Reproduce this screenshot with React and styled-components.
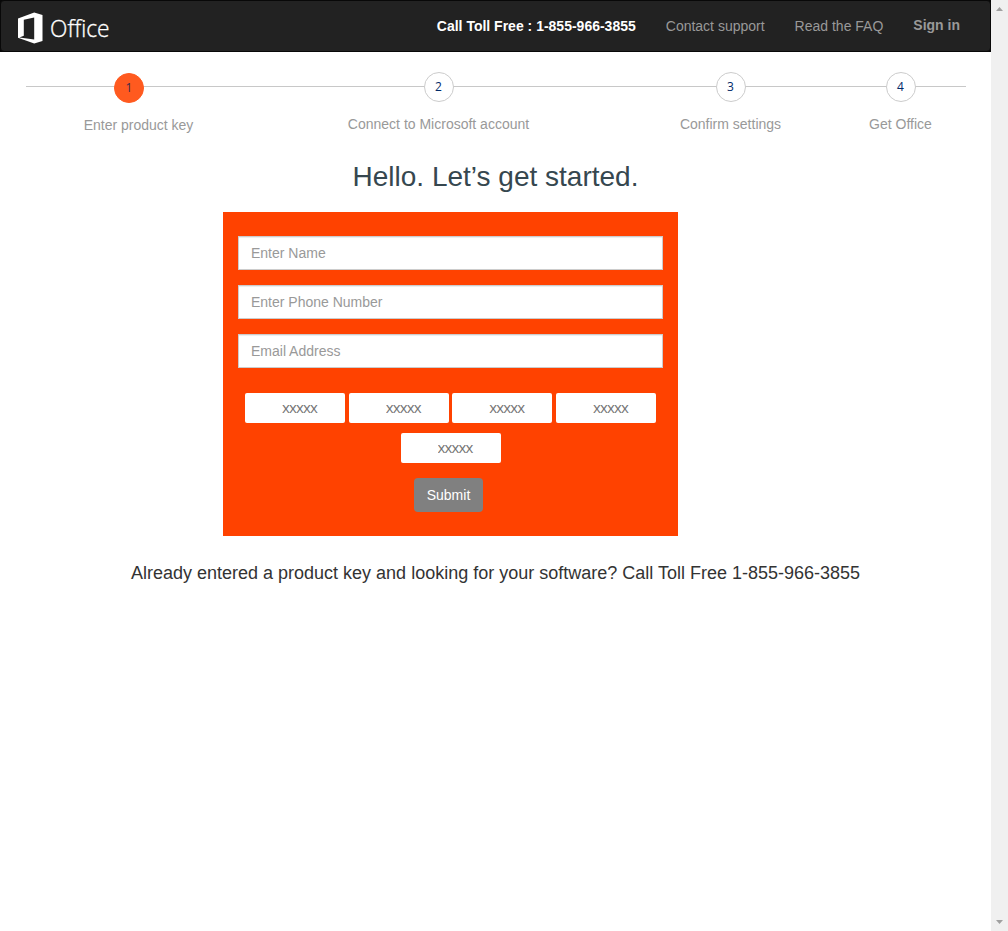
import React from 'react';
import styled, { createGlobalStyle } from 'styled-components';

const GlobalStyle = createGlobalStyle`
  * { box-sizing: border-box; }
  body {
    margin: 0;
    background: #fff;
    color: #333;
    font: 14px/20px "Liberation Sans", Arial, sans-serif;
  }
`;

const Shell = styled.div`
  display: flex;
  height: 931px;
  overflow: hidden;
`;

const Page = styled.main`
  width: 991px;
`;

const Navbar = styled.header`
  display: flex;
  align-items: flex-start;
  justify-content: space-between;
  height: 52px;
  padding: 0 30px 0 17px;
  background: #222;
  border: 1px solid #080808;
  border-radius: 4px;
  box-shadow: 0 0 0 4px #080808;
  clip-path: inset(0);
`;

const Brand = styled.a`
  display: flex;
  margin-top: 10px;
  margin-left: -1px;
`;

const Nav = styled.nav`
  display: flex;
  gap: 30px;
  padding-top: 15px;
`;

const NavLink = styled.a`
  color: ${(p) => (p.$bright ? '#fff' : '#999')};
  font-weight: ${(p) => (p.$bold ? 700 : 400)};
  white-space: nowrap;
`;

const SignIn = styled(NavLink)`
  margin-top: -1px;
`;

const Steps = styled.ol`
  position: relative;
  display: grid;
  grid-template-columns: 225px 375px 209px 131px;
  width: 940px;
  margin: 20px 0 0 26px;
  padding: 0;
  list-style: none;

  &::before {
    content: '';
    position: absolute;
    top: 14px;
    left: 0;
    right: 0;
    height: 1px;
    background: #c8c8c8;
  }
`;

const Step = styled.li`
  display: flex;
  flex-direction: column;
  align-items: center;
  gap: 12px;
  padding-top: ${(p) => (p.$active ? '1px' : '0')};
  color: #999;
`;

const StepNumber = styled.span`
  position: relative;
  width: 30px;
  height: 30px;
  margin-right: ${(p) => (p.$active ? '19px' : '0')};
  border: 1px solid ${(p) => (p.$active ? '#ff5a1f' : '#ccc')};
  border-radius: 50%;
  background: ${(p) => (p.$active ? '#ff5a1f' : '#fff')};
  color: ${(p) => (p.$active ? '#3a2a4c' : '#002a68')};
  font: 12px/28px "Open Sans", sans-serif;
  text-align: center;
`;

const Title = styled.h1`
  margin: 26px 0 19px;
  color: #36474f;
  font-size: 28px;
  font-weight: 400;
  line-height: 32px;
  text-align: center;
`;

const Form = styled.form`
  width: 455px;
  height: 324px;
  margin-left: 223px;
  padding: 24px 15px;
  background: #ff4200;
`;

const Field = styled.input`
  display: block;
  width: 100%;
  height: 34px;
  margin-bottom: 15px;
  padding: 6px 12px;
  border: 1px solid #ccc;
  border-radius: 0;
  box-shadow: inset 0 1px 1px rgba(0, 0, 0, 0.075);
  font: inherit;

  &::placeholder { color: #999; opacity: 1; }
`;

const KeyRow = styled.div`
  display: flex;
  flex-wrap: wrap;
  justify-content: center;
  gap: 10px 3.67px;
  margin-top: 25px;
`;

const KeyInput = styled.input`
  width: 100px;
  height: 30px;
  padding: 0 0 3px 37px;
  border: 0;
  border-radius: 2px;
  background: #fff;
  font: 15px "Open Sans", sans-serif;
  letter-spacing: -0.85px;

  &::placeholder { color: #757575; opacity: 1; }
`;

const Submit = styled.button`
  display: block;
  width: 69px;
  height: 34px;
  margin: 15px 0 0 176px;
  padding: 0;
  border: 0;
  border-radius: 4px;
  background: #808080;
  color: #fff;
  font: inherit;
`;

const Notice = styled.p`
  margin: 27px 0 0;
  font-size: 18px;
  text-align: center;
`;

const Scrollbar = styled.aside`
  display: flex;
  flex-direction: column;
  align-items: center;
  justify-content: space-between;
  width: 17px;
  padding: 7px 0;
  background: #f0f0f0;
`;

const Arrow = styled.svg`
  display: block;
  width: 7px;
  height: 4px;
  fill: #a0a0a0;
  transform: ${(p) => (p.$down ? 'rotate(180deg)' : 'none')};
`;

const WordMark = styled.text`
  fill: #fff;
  stroke: #fff;
  stroke-width: 0.35px;
  font: 300 24px "Open Sans", sans-serif;
`;

const steps = ['Enter product key', 'Connect to Microsoft account', 'Confirm settings', 'Get Office'];
const fields = ['Enter Name', 'Enter Phone Number', 'Email Address'];

const OfficeLogo = () => (
  <svg width="96" height="34" viewBox="0 0 96 34" aria-label="Office">
    <path fill="#fff" d="M1 7.6 17.2 1.6 25.5 4v26l-8.3 2.4L1 26.8V7.6M6.8 8.8v15.9L2.4 26.6l14.8 1.9V6.5z" fillRule="evenodd" />
    <WordMark x="33" y="26" textLength="59.5" lengthAdjust="spacingAndGlyphs">Office</WordMark>
  </svg>
);

export default function App() {
  return (
    <>
      <GlobalStyle />
      <Shell>
        <Page>
          <Navbar>
            <Brand><OfficeLogo /></Brand>
            <Nav>
              <NavLink $bold $bright>Call Toll Free : 1-855-966-3855</NavLink>
              <NavLink>Contact support</NavLink>
              <NavLink>Read the FAQ</NavLink>
              <SignIn $bold>Sign in</SignIn>
            </Nav>
          </Navbar>
          <Steps>
            {steps.map((label, i) => (
              <Step key={label} $active={i === 0}>
                <StepNumber $active={i === 0}>{i + 1}</StepNumber>
                <span>{label}</span>
              </Step>
            ))}
          </Steps>
          <Title>Hello. Let’s get started.</Title>
          <Form>
            {fields.map((name) => <Field key={name} placeholder={name} />)}
            <KeyRow>
              {[1, 2, 3, 4, 5].map((n) => <KeyInput key={n} placeholder="xxxxx" maxLength={5} />)}
            </KeyRow>
            <Submit type="button">Submit</Submit>
          </Form>
          <Notice>
            Already entered a product key and looking for your software? Call Toll Free 1-855-966-3855
          </Notice>
        </Page>
        <Scrollbar>
          <Arrow viewBox="0 0 7 4"><path d="M3.5 0 7 4H0z" /></Arrow>
          <Arrow $down viewBox="0 0 7 4"><path d="M3.5 0 7 4H0z" /></Arrow>
        </Scrollbar>
      </Shell>
    </>
  );
}
